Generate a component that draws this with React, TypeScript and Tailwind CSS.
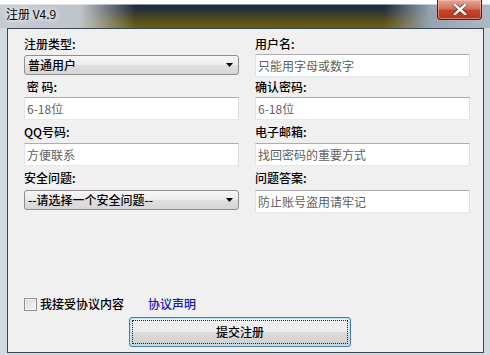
const FONT = "font-['Noto_Sans_CJK_SC','Noto_Sans',sans-serif]";

function Label({ children }: { children: React.ReactNode }) {
  return (
    <div className="flex items-center whitespace-pre text-[12px] font-medium leading-[14px] text-black">
      {children}
    </div>
  );
}

function TextBox({ hint }: { hint: string }) {
  return (
    <div className="flex h-[23px] items-center border border-t-[#abadb3] border-r-[#dbdfe6] border-b-[#e3e9ef] border-l-[#e2e3ea] bg-white pl-[2px] text-[12px] leading-[14px] text-[#606060]">
      {hint}
    </div>
  );
}

function ComboBox({ value }: { value: string }) {
  return (
    <div className="flex h-[20px] items-center justify-between self-start rounded-[3px] border border-[#8e8f8f] bg-[linear-gradient(to_bottom,#f6f6f6,#ececec_50%,#dfdfdf_50%,#d6d6d6)] pl-[3px] pr-[5px] text-[12px] font-medium leading-[14px] text-black">
      <span>{value}</span>
      <svg width="7" height="4" viewBox="0 0 7 4" aria-hidden>
        <path d="M0 0H7L3.5 4Z" fill="#000" />
      </svg>
    </div>
  );
}

function CloseButton() {
  return (
    <div className="flex h-[20px] w-[45px] items-center justify-center rounded-b-[4px] border border-t-0 border-[#5e1a10] bg-[linear-gradient(to_bottom,#e9a694,#d2725d_45%,#c2432b_55%,#b8341c)] shadow-[inset_0_0_0_1px_rgba(255,200,190,0.5)]">
      <svg width="14" height="11" viewBox="0 0 14 11" aria-hidden>
        <path
          d="M2 1L12 10M12 1L2 10"
          stroke="#4a1a14"
          strokeWidth="4"
          strokeLinecap="round"
          opacity="0.6"
        />
        <path d="M2 1L12 10M12 1L2 10" stroke="#ffffff" strokeWidth="2.4" strokeLinecap="square" />
      </svg>
    </div>
  );
}

export default function App() {
  return (
    <div className={`${FONT} flex h-[355px] w-[490px] flex-col bg-[#d3d9e0]`}>
      {/* title bar */}
      <div className="flex h-[28px] items-start justify-between bg-[linear-gradient(to_bottom,#ffffff_0px,#ffffff_4px,rgba(255,255,255,0)_5px),linear-gradient(to_right,#c6cbd1_0px,#bfc4ca_80px,rgba(190,196,202,0)_135px,rgba(150,162,176,0)_385px,#95a2b1_430px,#aeb8c3_490px),linear-gradient(to_bottom,#1f2b3b_5px,#2c3438_11px,#565018_21px,#6d5f14_28px)]">
        <div className="pl-[6px] pt-[7px] text-[12px] leading-[14px] text-black [text-shadow:0_0_4px_#fff,0_0_6px_#fff]">
          注册 V4.9
        </div>
        <div className="mr-[8px]">
          <CloseButton />
        </div>
      </div>

      {/* client area */}
      <div className="ml-[7px] flex h-[325px] w-[477px] flex-col border border-[#3a4654] bg-[#f0f0f0]">
        <div className="grid grid-cols-[215px_215px] grid-rows-[21px_23px_20px_23px_23px_23px_24px_23px] gap-x-[16px] pl-[16px] pt-[4px]">
          <Label>注册类型:</Label>
          <Label>用户名:</Label>
          <div className="pt-px">
            <ComboBox value="普通用户" />
          </div>
          <TextBox hint="只能用字母或数字" />

          <Label>{"\u00a0密\u00a0码:"}</Label>
          <Label>确认密码:</Label>
          <TextBox hint="6-18位" />
          <TextBox hint="6-18位" />

          <Label>QQ号码:</Label>
          <Label>电子邮箱:</Label>
          <TextBox hint="方便联系" />
          <TextBox hint="找回密码的重要方式" />

          <Label>安全问题:</Label>
          <Label>问题答案:</Label>
          <ComboBox value="--请选择一个安全问题--" />
          <TextBox hint="防止账号盗用请牢记" />
        </div>

        <div className="flex-1" />

        <div className="flex h-[16px] items-center pl-[16px] text-[12px] leading-[14px]">
          <span className="h-[13px] w-[13px] border border-[#8f8f8f] bg-[linear-gradient(135deg,#d8d8d8,#f7f7f7)] shadow-[inset_0_0_0_1px_#f4f4f4]" />
          <span className="ml-[3px] font-medium text-black">我接受协议内容</span>
          <span className="ml-[24px] font-medium text-[#1515b8]">协议声明</span>
        </div>

        <div className="mt-[5px] mb-[5px] pl-[121px]">
          <div className="h-[30px] w-[222px] rounded-[3px] border border-[#3c7fb1] bg-[linear-gradient(to_bottom,#f2f2f2,#ebebeb_50%,#dddddd_50%,#cfcfcf)] p-[2px] shadow-[inset_0_0_0_1px_#bfe3f7]">
            <div className="flex h-full items-center justify-center border border-dotted border-[#222] text-[12px] font-medium leading-[14px] text-black">
              提交注册
            </div>
          </div>
        </div>
      </div>
    </div>
  );
}
